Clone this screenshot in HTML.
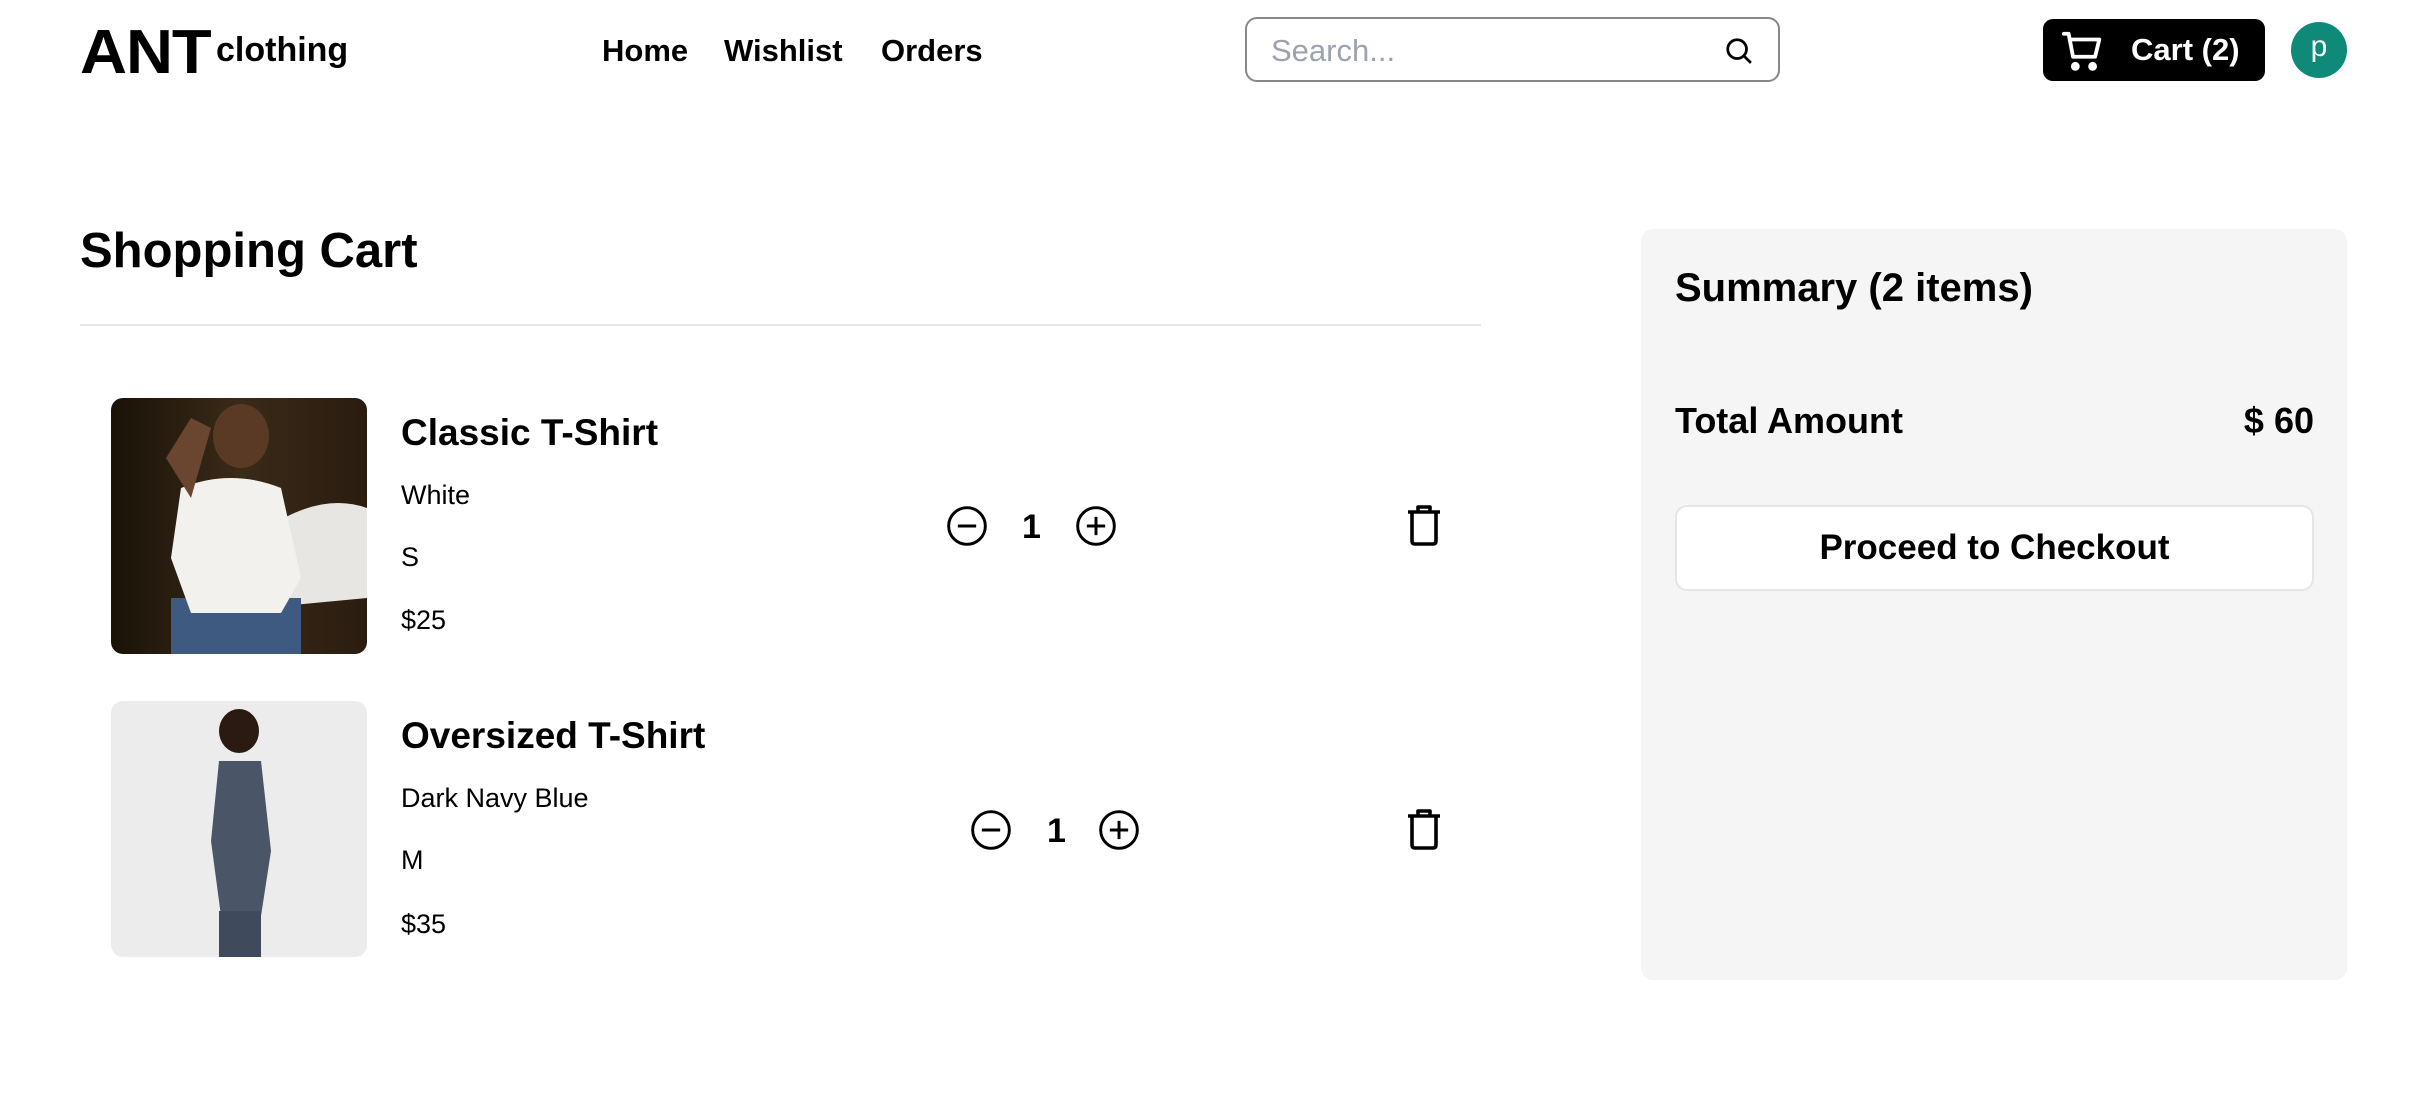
<!DOCTYPE html>
<html><head><meta charset="utf-8"><style>
*{margin:0;padding:0;box-sizing:border-box}
body{width:2428px;height:1110px;background:#fff;font-family:"Liberation Sans",sans-serif;color:#000;position:relative;overflow:hidden}
.a{position:absolute;white-space:nowrap}
</style></head><body>
<div class="a" style="left:80px;top:18px;font-size:62px;font-weight:900;letter-spacing:-1px;line-height:70px;transform:scaleX(1.05);transform-origin:left">ANT</div>
<div class="a" style="left:216px;top:30px;font-size:34px;font-weight:700;line-height:40px">clothing</div>
<div class="a" style="left:602px;top:32px;font-size:31px;font-weight:600;line-height:38px">Home</div>
<div class="a" style="left:724px;top:32px;font-size:31px;font-weight:600;line-height:38px">Wishlist</div>
<div class="a" style="left:881px;top:32px;font-size:31px;font-weight:600;line-height:38px">Orders</div>
<div class="a" style="left:1245px;top:17px;width:535px;height:65px;border:2px solid #888;border-radius:12px"></div>
<div class="a" style="left:1271px;top:32px;font-size:31px;color:#9ca3af;line-height:38px">Search...</div>
<svg class="a" style="left:1724px;top:36px" width="30" height="30" viewBox="0 0 24 24" fill="none" stroke="#000" stroke-width="2.2"><circle cx="10.5" cy="10.5" r="7.5"/><path d="M16 16l5.5 5.5"/></svg>
<div class="a" style="left:2043px;top:19px;width:222px;height:62px;background:#000;border-radius:10px"></div>
<svg class="a" style="left:2060px;top:28px" width="46" height="46" viewBox="0 0 24 24" fill="none" stroke="#fff" stroke-width="2" stroke-linecap="round" stroke-linejoin="round"><path d="M2 3h2.5l2.3 12h11.5l2.2-9H5.5"/><circle cx="8" cy="20" r="1.3" fill="#fff"/><circle cx="17" cy="20" r="1.3" fill="#fff"/></svg>
<div class="a" style="left:2131px;top:31px;font-size:31px;font-weight:700;color:#fff;line-height:38px">Cart (2)</div>
<div class="a" style="left:2291px;top:22px;width:56px;height:56px;border-radius:50%;background:#0f8a78;color:#fff;font-size:30px;text-align:center;line-height:50px">p</div>

<div class="a" style="left:80px;top:222px;font-size:49px;font-weight:700;line-height:58px">Shopping Cart</div>
<div class="a" style="left:80px;top:324px;width:1401px;height:2px;background:#e5e7eb"></div>

<svg class="a" style="left:111px;top:398px;border-radius:12px" width="256" height="256" viewBox="0 0 256 256">
<defs><linearGradient id="g1" x1="0" x2="1"><stop offset="0" stop-color="#1a1208"/><stop offset=".5" stop-color="#3a2a18"/><stop offset="1" stop-color="#2a1c10"/></linearGradient></defs>
<rect width="256" height="256" fill="url(#g1)"/>
<path d="M130 150 Q200 90 256 110 L256 200 L150 210Z" fill="#e8e6e2"/>
<rect x="60" y="200" width="130" height="56" fill="#3f5a80"/>
<path d="M70 90 Q120 70 170 90 L190 180 L170 215 L80 215 L60 160Z" fill="#f3f1ee"/>
<ellipse cx="130" cy="38" rx="28" ry="32" fill="#5a3a24"/>
<path d="M55 60 L80 20 L100 30 L80 100Z" fill="#6a4630"/>
</svg>
<div class="a" style="left:401px;top:411px;font-size:37px;font-weight:700;line-height:44px">Classic T-Shirt</div>
<div class="a" style="left:401px;top:479px;font-size:27px;line-height:32px">White</div>
<div class="a" style="left:401px;top:541px;font-size:27px;line-height:32px">S</div>
<div class="a" style="left:401px;top:604px;font-size:27px;line-height:32px">$25</div>

<svg class="a" style="left:111px;top:701px;border-radius:12px" width="256" height="256" viewBox="0 0 256 256">
<rect width="256" height="256" fill="#ececec"/>
<ellipse cx="128" cy="30" rx="20" ry="22" fill="#2a1a12"/>
<path d="M108 60 L150 60 L160 150 L150 215 L110 215 L100 140Z" fill="#4a5568"/>
<rect x="108" y="210" width="42" height="46" fill="#3f4a5c"/>
</svg>
<div class="a" style="left:401px;top:714px;font-size:37px;font-weight:700;line-height:44px">Oversized T-Shirt</div>
<div class="a" style="left:401px;top:782px;font-size:27px;line-height:32px">Dark Navy Blue</div>
<div class="a" style="left:401px;top:844px;font-size:27px;line-height:32px">M</div>
<div class="a" style="left:401px;top:908px;font-size:27px;line-height:32px">$35</div>

<svg class="a" style="left:945px;top:504px" width="44" height="44" viewBox="0 0 24 24" fill="none" stroke="#000" stroke-width="1.6"><circle cx="12" cy="12" r="10"/><path d="M7 12h10"/></svg>
<div class="a" style="left:1022px;top:507px;font-size:34px;font-weight:700;line-height:40px">1</div>
<svg class="a" style="left:1074px;top:504px" width="44" height="44" viewBox="0 0 24 24" fill="none" stroke="#000" stroke-width="1.6"><circle cx="12" cy="12" r="10"/><path d="M7 12h10M12 7v10"/></svg>
<svg class="a" style="left:1404px;top:504px" width="40" height="44" viewBox="0 0 20 22" fill="none" stroke="#000" stroke-width="1.8" stroke-linejoin="round"><path d="M2 4h16M7 4V1.5h6V4M4 4v14.5q0 1.5 1.5 1.5h9q1.5 0 1.5-1.5V4"/></svg>

<svg class="a" style="left:969px;top:808px" width="44" height="44" viewBox="0 0 24 24" fill="none" stroke="#000" stroke-width="1.6"><circle cx="12" cy="12" r="10"/><path d="M7 12h10"/></svg>
<div class="a" style="left:1047px;top:811px;font-size:34px;font-weight:700;line-height:40px">1</div>
<svg class="a" style="left:1097px;top:808px" width="44" height="44" viewBox="0 0 24 24" fill="none" stroke="#000" stroke-width="1.6"><circle cx="12" cy="12" r="10"/><path d="M7 12h10M12 7v10"/></svg>
<svg class="a" style="left:1404px;top:808px" width="40" height="44" viewBox="0 0 20 22" fill="none" stroke="#000" stroke-width="1.8" stroke-linejoin="round"><path d="M2 4h16M7 4V1.5h6V4M4 4v14.5q0 1.5 1.5 1.5h9q1.5 0 1.5-1.5V4"/></svg>

<div class="a" style="left:1641px;top:229px;width:706px;height:751px;background:#f5f5f5;border-radius:12px"></div>
<div class="a" style="left:1675px;top:264px;font-size:40px;font-weight:700;line-height:48px">Summary (2 items)</div>
<div class="a" style="left:1675px;top:400px;font-size:36px;font-weight:600;line-height:42px">Total Amount</div>
<div class="a" style="left:2314px;top:400px;font-size:36px;font-weight:700;line-height:42px;transform:translateX(-100%)">$ 60</div>
<div class="a" style="left:1675px;top:505px;width:639px;height:86px;background:#fff;border:2px solid #e5e5e5;border-radius:12px;font-size:35px;font-weight:700;text-align:center;line-height:82px">Proceed to Checkout</div>
</body></html>
